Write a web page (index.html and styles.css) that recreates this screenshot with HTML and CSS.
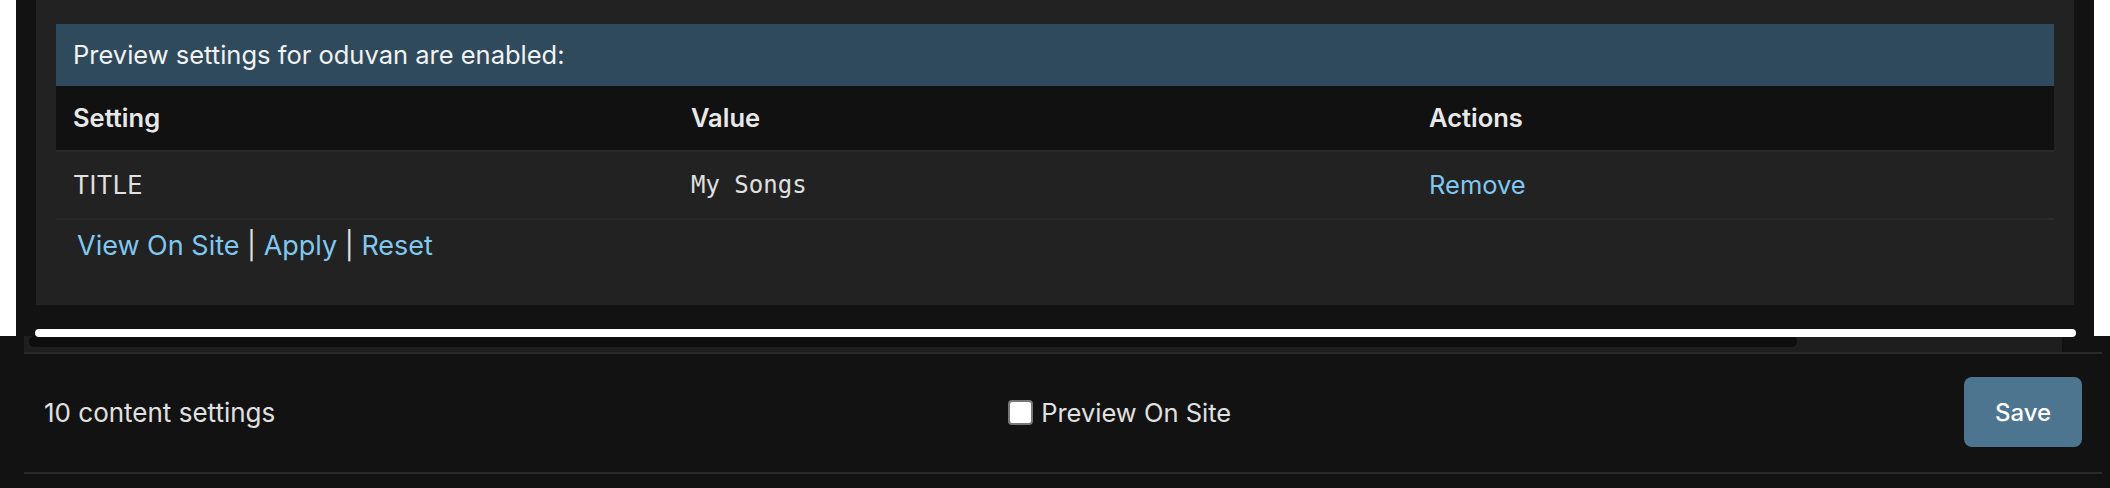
FILE: index.html
```html
<!DOCTYPE html>
<html>
<head>
<meta charset="utf-8">
<link rel="stylesheet" href="styles.css">
</head>
<body>
<div class="frame">
  <div class="frame-inner">
    <section class="panel">
      <div class="banner">Preview settings for oduvan are enabled:</div>
      <table class="settings">
        <colgroup>
          <col class="col-setting">
          <col class="col-value">
          <col class="col-actions">
        </colgroup>
        <thead>
          <tr><th>Setting</th><th>Value</th><th>Actions</th></tr>
        </thead>
        <tbody>
          <tr>
            <td>TITLE</td>
            <td class="mono">My Songs</td>
            <td><a class="link" href="#">Remove</a></td>
          </tr>
        </tbody>
      </table>
      <div class="links">
        <a class="link" href="#">View On Site</a> | <a class="link" href="#">Apply</a> | <a class="link" href="#">Reset</a>
      </div>
    </section>
  </div>
</div>
<div class="hscroll"><div class="hscroll-thumb"></div></div>
<div class="overlay-thumb"></div>
<footer class="footer">
  <span class="count">10 content settings</span>
  <label class="preview"><input type="checkbox" class="check">Preview On Site</label>
  <button class="save">Save</button>
</footer>
</body>
</html>
```
FILE: styles.css
```css
* { box-sizing: border-box; }
html, body { margin: 0; padding: 0; }
body {
  background: #121212;
  color: #e6e6e6;
  font-family: "Inter", "Noto Sans", sans-serif;
  font-size: 25.5px;
  position: relative;
  height: 488px;
  overflow: hidden;
}
.frame {
  background: #ffffff;
  padding: 0 16px;
}
.frame-inner {
  background: #121212;
  padding: 0 20px 31px;
}
.panel {
  background: #222222;
  padding: 24px 20px 20px;
}
.banner {
  background: #2f4a5c;
  height: 62px;
  line-height: 62px;
  padding: 0 17px;
  color: #f2f2f2;
}
.settings {
  width: 100%;
  border-collapse: collapse;
  table-layout: fixed;
}
.col-setting { width: 618px; }
.col-value { width: 738px; }
.settings th {
  background: #111111;
  height: 64px;
  line-height: 64px;
  padding: 0 17px;
  text-align: left;
  font-weight: 600;
  color: #e8e8e8;
}
.settings td {
  height: 68px;
  line-height: 64px;
  padding: 0 17px;
  border-top: 2px solid #2a2a2a;
  border-bottom: 2px solid #2a2a2a;
  color: #e0e0e0;
}
.settings td.mono {
  font-family: "DejaVu Sans Mono", monospace;
  font-size: 24px;
}
.link {
  color: #80c8f0;
  text-decoration: none;
}
.links {
  padding: 10px 21px 24px;
  font-size: 27px;
  line-height: 31px;
  color: #e0e0e0;
}
.hscroll {
  margin-left: 24px;
  width: 2038px;
  height: 16px;
  background: #1e1e1e;
  padding-left: 5px;
}
.hscroll-thumb {
  width: 1768px;
  height: 11px;
  background: #0d0d0d;
  border-radius: 6px;
}
.overlay-thumb {
  position: absolute;
  left: 35px;
  top: 329px;
  width: 2041px;
  height: 8px;
  background: #ffffff;
  border-radius: 4px;
}
.footer {
  margin-left: 24px;
  width: 2078px;
  height: 122px;
  border-top: 2px solid #2a2a2a;
  border-bottom: 2px solid #2a2a2a;
  padding: 0 20px 2px;
  display: flex;
  justify-content: space-between;
  align-items: center;
  color: #e0e0e0;
}
.count {
  font-size: 26px;
}
.preview {
  display: flex;
  align-items: center;
}
.check {
  appearance: none;
  -webkit-appearance: none;
  width: 25px;
  height: 25px;
  margin: 0 8px 0 0;
  background: #ffffff;
  border: 2px solid #767676;
  border-radius: 4px;
}
.save {
  width: 118px;
  height: 70px;
  border: none;
  border-radius: 8px;
  background: #4d7590;
  color: #ffffff;
  font-family: "Inter", "Noto Sans", sans-serif;
  font-size: 24px;
  font-weight: 500;
}
```
